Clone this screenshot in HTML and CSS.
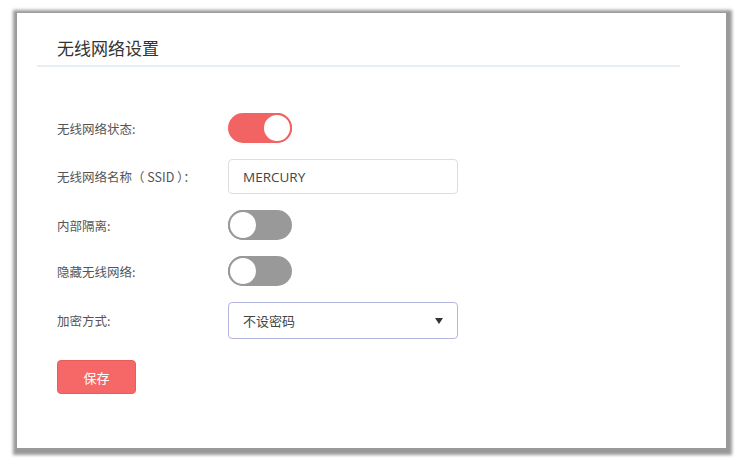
FILE: index.html
```html
<!DOCTYPE html>
<html lang="zh-CN">

<head>
    <meta charset="UTF-8">
    <meta name="viewport" content="width=device-width, initial-scale=1.0">
    <title>无线网络设置</title>
    <link rel="stylesheet" href="styles.css">
</head>

<body>

    <div class="panel">
        <div class="panel-head">
            <h2>无线网络设置</h2>
        </div>

        <form class="wifi-form" onsubmit="return false;">
            <div class="row">
                <label>无线网络状态:</label>
                <span class="switch on"><span class="knob"></span></span>
            </div>
            <div class="row">
                <label>无线网络名称（ SSID ）：</label>
                <input type="text" class="field" value="MERCURY">
            </div>
            <div class="row">
                <label>内部隔离:</label>
                <span class="switch"><span class="knob"></span></span>
            </div>
            <div class="row">
                <label>隐藏无线网络:</label>
                <span class="switch"><span class="knob"></span></span>
            </div>
            <div class="row">
                <label>加密方式:</label>
                <div class="field select">
                    <span>不设密码</span>
                    <span class="arrow"></span>
                </div>
            </div>
            <button class="save">保存</button>
        </form>
    </div>

</body>

</html>
```

FILE: styles.css
```css
html, body {
    height: 100%;
}

body {
    margin: 0;
    padding-top: 13px;
    box-sizing: border-box;
    background-color: #fff;
    font-family: "Noto Sans CJK SC", "Open Sans", sans-serif;
    color: #444;
}

.panel {
    margin-left: 17px;
    width: 709px;
    height: 435px;
    background-color: #fff;
    box-shadow: 1px 2px 3px 5px rgba(0, 0, 0, 0.4);
    box-sizing: border-box;
}

.panel-head {
    margin: 0 46px 0 20px;
    padding: 23px 0 0 20px;
    height: 29px;
    border-bottom: 2px solid #e8eff4;
}

.panel-head h2 {
    margin: 0;
    font-size: 17px;
    font-weight: normal;
    line-height: 24px;
    color: #333;
}

.wifi-form {
    padding: 46px 0 0 40px;
}

.row {
    display: flex;
    align-items: center;
    margin-bottom: 16px;
}

.row label {
    width: 171px;
    font-size: 12.5px;
    color: #555;
}

.switch {
    position: relative;
    display: inline-block;
    width: 64px;
    height: 30px;
    border-radius: 15px;
    background-color: #999;
}

.switch .knob {
    position: absolute;
    top: 0;
    left: 0;
    width: 26px;
    height: 26px;
    border-radius: 50%;
    background-color: #fff;
    border: 2px solid #999;
}

.switch.on {
    background-color: #f26464;
}

.switch.on .knob {
    left: auto;
    right: 0;
    border-color: #f26464;
}

.field {
    width: 230px;
    height: 35px;
    box-sizing: border-box;
    border: 1px solid #ddd;
    border-radius: 4px;
    padding: 0 14px;
    font-family: "Open Sans", "Noto Sans CJK SC", sans-serif;
    font-size: 13.5px;
    color: #444;
    outline: none;
}

.select {
    display: flex;
    align-items: center;
    justify-content: space-between;
    height: 37px;
    border-color: #b4b6e0;
    font-family: "Noto Sans CJK SC", sans-serif;
    font-size: 13px;
}

.select .arrow {
    width: 0;
    height: 0;
    border-left: 4.5px solid transparent;
    border-right: 4.5px solid transparent;
    border-top: 6px solid #333;
}

.save {
    margin-top: 5px;
    width: 79px;
    height: 34px;
    border: 1px solid #e85c5c;
    border-radius: 4px;
    background-color: #f66868;
    color: #fff;
    font-family: "Noto Sans CJK SC", sans-serif;
    font-size: 13px;
    cursor: pointer;
}
```
